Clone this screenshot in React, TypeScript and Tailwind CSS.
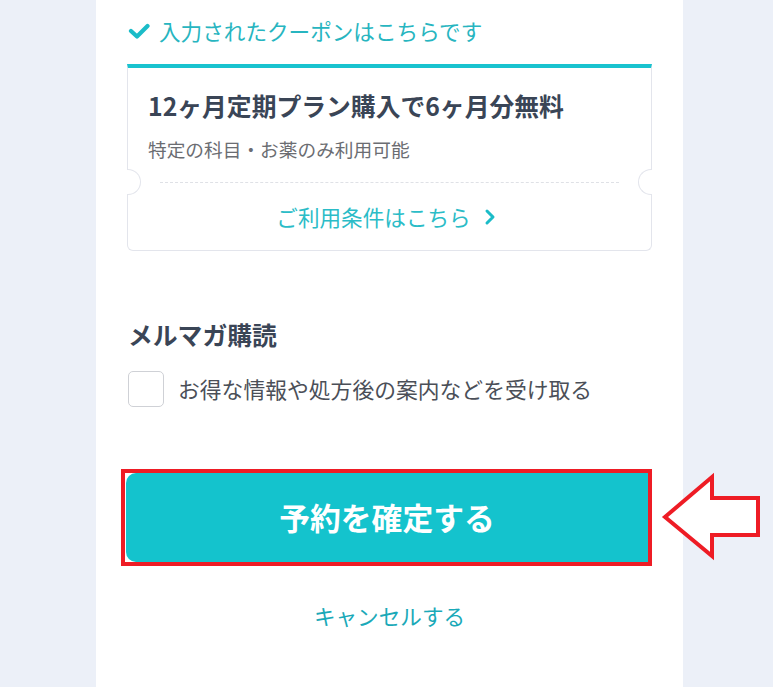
import React from 'react';

const font = { fontFamily: '"Noto Sans CJK JP", "Noto Sans", sans-serif' };

function CheckIcon() {
  return (
    <svg width="22" height="16" viewBox="0 0 22 16" className="shrink-0">
      <polyline
        points="3,8 9,13.5 19.5,3"
        fill="none"
        stroke="#1bbcc8"
        strokeWidth="4.2"
        strokeLinecap="round"
        strokeLinejoin="round"
      />
    </svg>
  );
}

function Chevron() {
  return (
    <svg width="12" height="18" viewBox="0 0 12 18" className="ml-[13px] shrink-0">
      <polyline
        points="3,3 9,9 3,15"
        fill="none"
        stroke="#1bbcc8"
        strokeWidth="3"
        strokeLinecap="round"
        strokeLinejoin="round"
      />
    </svg>
  );
}

function Arrow() {
  return (
    <svg
      width="104"
      height="92"
      viewBox="0 0 104 92"
      className="absolute left-[660px] top-[472px]"
    >
      <polygon
        points="5,45 52,5 52,26 98,26 98,63 52,63 52,84"
        fill="#ffffff"
        stroke="#ee1c25"
        strokeWidth="4"
        strokeLinejoin="miter"
      />
    </svg>
  );
}

export default function App() {
  return (
    <div className="relative min-h-screen bg-[#ecf0f8] overflow-hidden" style={font}>
      <div className="ml-[96px] w-[587px] h-[687px] bg-white px-[31px] pt-[14px]">
        {/* applied coupon */}
        <div className="flex items-center h-[34px] text-[21.6px] text-[#27b5c0]">
          <span className="ml-[1px]">
            <CheckIcon />
          </span>
          <span className="ml-[9px] leading-[34px]">入力されたクーポンはこちらです</span>
        </div>

        <div className="mt-[16px] border-t-4 border-t-[#19c3cf] border-x border-b border-[#e3e5ec] rounded-b-md pb-[17px]">
          <div className="px-[20px] mt-[19px] h-[36px] leading-[36px] text-[24.8px] font-bold text-[#3a4556]">
            12ヶ月定期プラン購入で6ヶ月分無料
          </div>
          <div className="px-[20px] mt-[12px] h-[28px] leading-[28px] text-[18.7px] text-[#6b6d72]">
            特定の科目・お薬のみ利用可能
          </div>

          <div className="relative mt-[6px] h-[26px] flex items-center">
            <div className="absolute -left-px top-0 w-[14px] h-[26px] bg-white border border-l-0 border-[#e3e5ec] rounded-r-full" />
            <div className="ml-[32px] mr-[32px] flex-1 border-t border-dashed border-[#dfe1e6]" />
            <div className="absolute -right-px top-0 w-[14px] h-[26px] bg-white border border-r-0 border-[#e3e5ec] rounded-l-full" />
          </div>

          <div className="mt-[6px] h-[32px] flex items-center justify-center text-[21.6px] text-[#2bbcc7]">
            <span className="leading-[32px]">ご利用条件はこちら</span>
            <Chevron />
            <span className="w-[7px]" />
          </div>
        </div>

        {/* newsletter */}
        <div className="mt-[65px] h-[36px] leading-[36px] text-[24.8px] font-bold text-[#3a4556] ml-[1px]">
          メルマガ購読
        </div>
        <label className="mt-[19px] flex items-center h-[36px] ml-[1px]">
          <span className="w-[36px] h-[36px] rounded-[5px] border-[1.5px] border-[#cfd1d6] bg-white shrink-0" />
          <span className="ml-[14px] text-[21.8px] text-[#4b4f58] leading-[36px]">
            お得な情報や処方後の案内などを受け取る
          </span>
        </label>

        {/* confirm */}
        <div className="mt-[62px] -ml-[6px] w-[531px] border-4 border-[#ee1c25]">
          <button className="ml-px w-[calc(100%-1px)] h-[89px] rounded-l-[10px] bg-[#14c3cd] text-white text-[30.8px] font-bold flex items-center justify-center">
            予約を確定する
          </button>
        </div>

        <div className="mt-[34px] h-[32px] leading-[32px] text-center text-[21.6px] text-[#1aa9b8]">
          キャンセルする
        </div>
      </div>

      <Arrow />
    </div>
  );
}
